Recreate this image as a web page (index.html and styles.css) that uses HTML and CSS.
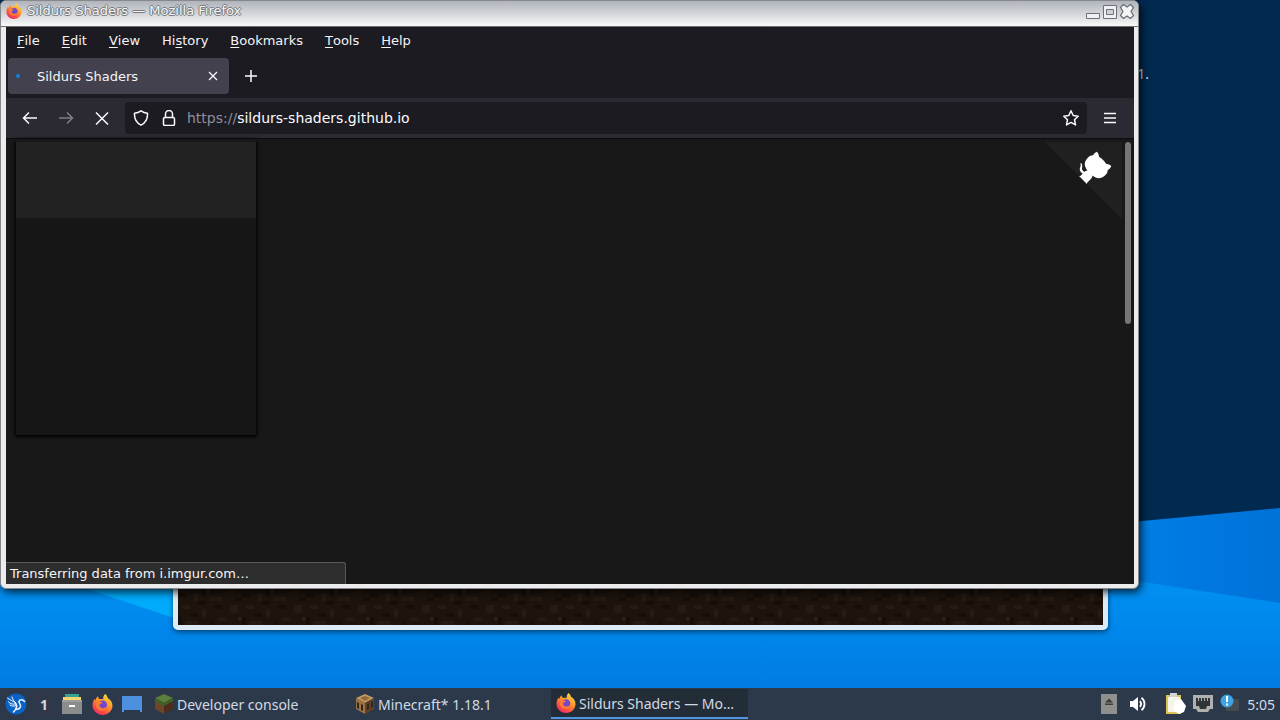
FILE: index.html
```html
<!DOCTYPE html>
<html lang="en">
<head>
    <meta charset="UTF-8">
    <meta name="viewport" content="width=device-width, initial-scale=1.0">
    <title>Sildurs Shaders</title>
    <link rel="stylesheet" href="styles.css">
</head>
<body>
    <!-- shared icons -->
    <svg class="defs" aria-hidden="true">
        <defs>
            <linearGradient id="fox-body" x1="0.8" y1="0" x2="0.2" y2="1">
                <stop offset="0" stop-color="#ffe14a"/>
                <stop offset="0.4" stop-color="#ff9a2b"/>
                <stop offset="0.75" stop-color="#ff4a43"/>
                <stop offset="1" stop-color="#e5277b"/>
            </linearGradient>
            <symbol id="firefox" viewBox="0 0 20 20">
                <path fill="url(#fox-body)" d="M12.6 0c1.6 1.2 2 2.6 2.3 3.8 2.800 1.600 4.600 4 4.600 7.200 0 5-4.200 9-9.400 9S.5 16 .5 10.800c0-2.300.8-4.500 2-6.200.1.700.3 1.200.6 1.600.5-1.800 1.400-3.100 2.700-4 0 1.500.6 2.400 1.600 2.900 1.200-.5 2.300-.5 3.300-.2C10.500 3 11 1.300 12.600 0z"/>
                <circle cx="10" cy="10.500" r="4.300" fill="#7446c9"/>
                <path fill="#ff7b32" d="M3.600 8.500c2-1.600 4.500-1.600 6.300-.6-.4 1.300-2.100 1.200-2.600 2.200-.6 2 1 3.500 2.900 3.400 1.600 0 2.700-.8 3.800-1.700-.4 2.700-2.500 4.400-5 4.200-3.500-.2-5.700-3-5.400-7.500z"/>
            </symbol>
        </defs>
    </svg>

    <main class="desktop">
        <svg class="wallpaper" viewBox="0 0 1280 688" preserveAspectRatio="none" aria-hidden="true">
            <defs>
                <linearGradient id="sea" x1="0" y1="0" x2="0" y2="1">
                    <stop offset="0" stop-color="#0094f5"/>
                    <stop offset="1" stop-color="#007ce2"/>
                </linearGradient>
                <linearGradient id="ridge" x1="0" y1="0" x2="1" y2="0">
                    <stop offset="0" stop-color="#0081e8"/>
                    <stop offset="1" stop-color="#0072d8"/>
                </linearGradient>
            </defs>
            <path fill="#002a50" d="M0 0h1280v688H0z"/>
            <path fill="url(#ridge)" d="M1100 525L1280 508V610H1100z"/>
            <path fill="url(#sea)" d="M0 560H1000L1280 603V688H0z"/>
            <path fill="#00abfc" d="M60 580H260L180 620z"/>
        </svg>

        <span class="icon-label">1.</span>

        <section class="game-window" aria-label="Minecraft* 1.18.1">
            <svg class="dirt" aria-hidden="true">
                <defs>
                    <pattern id="dirt" x="0" y="20" width="64" height="64" patternUnits="userSpaceOnUse">
                        <path fill="#1d140d" d="M0 0h64v64H0z"/>
                        <path fill="#261a11" d="M4 4h8v4H4zM24 0h12v4H24zM48 8h8v4h-8zM16 12h4v8h-4zM32 16h12v4H32zM4 24h8v4H4zM52 24h8v8h-8zM24 28h4v8h-4zM40 36h8v4h-8zM8 40h12v4H8zM56 44h8v4h-8zM28 48h8v4h-8zM12 56h4v4h-4zM44 56h8v4h-8z"/>
                        <path fill="#150e09" d="M12 0h8v4h-8zM40 4h8v4h-8zM0 12h8v4H0zM24 8h4v8h-4zM56 16h8v4h-8zM20 20h8v4h-8zM36 24h8v4h-8zM12 32h8v4h-8zM0 36h4v8H0zM32 40h4v4h-4zM48 48h8v4h-8zM20 52h8v4h-8zM0 56h8v4H0zM36 60h8v4h-8z"/>
                        <path fill="#272019" d="M28 8h4v4h-4zM60 36h4v4h-4zM16 44h4v4h-4z"/>
                    </pattern>
                </defs>
                <rect width="100%" height="100%" fill="url(#dirt)"/>
            </svg>
        </section>

        <section class="window" aria-label="Sildurs Shaders — Mozilla Firefox">
            <header class="titlebar">
                <svg class="title-icon" aria-hidden="true"><use href="#firefox"/></svg>
                <span class="title-text">Sildurs Shaders — Mozilla Firefox</span>
                <button class="win-btn" aria-label="Minimize">
                    <svg width="16" height="16" viewBox="0 0 16 16"><path d="M1.500 10.500h13v5h-13z" fill="#eef0f3" stroke="#6c7077"/></svg>
                </button>
                <button class="win-btn" aria-label="Maximize">
                    <svg width="16" height="16" viewBox="0 0 16 16"><path d="M1.500 2.500h13v13h-13zM4.500 6.500v5h7v-5z" fill="#eef0f3" fill-rule="evenodd" stroke="#6c7077"/></svg>
                </button>
                <button class="win-btn" aria-label="Close">
                    <svg width="16" height="16" viewBox="0 0 16 16"><path d="M4.500 1.500L8 4l3.500-2.500 3 3L12 8.500l2.500 4-3 3L8 13l-3.500 2.500-3-3 2.500-4-2.500-4z" fill="#f4f5f7" stroke="#6c7077" stroke-width="1.300" stroke-linejoin="round"/></svg>
                </button>
            </header>

            <div class="browser">
                <nav class="menubar" aria-label="Menu">
                    <button><u>F</u>ile</button>
                    <button><u>E</u>dit</button>
                    <button><u>V</u>iew</button>
                    <button>Hi<u>s</u>tory</button>
                    <button><u>B</u>ookmarks</button>
                    <button><u>T</u>ools</button>
                    <button><u>H</u>elp</button>
                </nav>

                <div class="tabs">
                    <div class="tab">
                        <span class="loading"></span>
                        <span class="tab-title">Sildurs Shaders</span>
                        <button class="tab-close" aria-label="Close tab">
                            <svg width="10" height="10" viewBox="0 0 10 10"><path d="M1 1l8 8M9 1l-8 8"/></svg>
                        </button>
                    </div>
                    <button class="new-tab" aria-label="New tab">
                        <svg width="14" height="14" viewBox="0 0 14 14"><path d="M7 1v12M1 7h12"/></svg>
                    </button>
                </div>

                <div class="toolbar">
                    <button class="tool" aria-label="Back">
                        <svg width="16" height="16" viewBox="0 0 16 16"><path d="M15 8H2M7 2.500L1.500 8 7 13.500"/></svg>
                    </button>
                    <button class="tool" aria-label="Forward" disabled>
                        <svg width="16" height="16" viewBox="0 0 16 16"><path d="M1 8h13M9 2.500L14.500 8 9 13.500"/></svg>
                    </button>
                    <button class="tool" aria-label="Stop">
                        <svg width="16" height="16" viewBox="0 0 16 16"><path d="M2 2.500l12 12M14 2.500l-12 12"/></svg>
                    </button>
                    <div class="urlbar">
                        <button class="url-icon" aria-label="Tracking protection">
                            <svg width="16" height="16" viewBox="0 0 16 16"><path stroke-linejoin="round" d="M8 .8C6 2.200 4 2.900 1.500 3.200c-.3 5.300 1.500 9.500 6.500 12 5-2.500 6.800-6.700 6.500-12C12 2.900 10 2.200 8 .8z"/></svg>
                        </button>
                        <button class="url-icon" aria-label="Site information">
                            <svg width="16" height="16" viewBox="0 0 16 16"><rect x="2.500" y="7.500" width="11" height="8" rx="1.500"/><path d="M4.500 7.500V4a3.500 3.500 0 0 1 7 0v3.500"/></svg>
                        </button>
                        <label for="url">https://</label>
                        <input id="url" type="text" value="sildurs-shaders.github.io" spellcheck="false">
                        <button class="url-icon" aria-label="Bookmark this page">
                            <svg width="16" height="16" viewBox="0 0 16 16"><path stroke-linejoin="round" d="M8 .8l2.200 4.700 5 .7-3.700 3.500 1 5.200L8 12.400l-4.500 2.500 1-5.200L.8 6.200l5-.7z"/></svg>
                        </button>
                    </div>
                    <button class="tool" aria-label="Open application menu">
                        <svg width="12" height="12" viewBox="0 0 12 12"><path d="M0 1.500h12M0 6h12M0 10.500h12"/></svg>
                    </button>
                </div>

                <div class="page">
                    <div class="card">
                        <div class="card-head"></div>
                    </div>
                    <a class="github-corner" href="#" aria-label="View source on GitHub">
                        <svg width="80" height="80" viewBox="0 0 250 250">
                            <path fill="#202020" d="M0,0 L115,115 L130,115 L142,142 L250,250 L250,0 Z"/>
                            <path fill="#fff" d="M128.3,109.0 C113.8,99.7 119.0,89.6 119.0,89.6 C122.0,82.7 120.5,78.6 120.5,78.6 C119.2,72.0 123.4,76.3 123.4,76.3 C127.3,80.9 125.5,87.3 125.5,87.3 C122.9,97.6 130.6,101.9 134.4,103.2"/>
                            <path fill="#fff" d="M115.0,115.0 C114.9,115.1 118.7,116.5 119.8,115.4 L133.7,101.6 C136.9,99.2 139.9,98.4 142.2,98.6 C133.8,88.0 127.5,74.4 143.8,58.0 C148.5,53.4 154.0,51.2 159.7,51.0 C160.3,49.4 163.2,43.6 171.4,40.1 C171.4,40.1 176.1,42.5 178.8,56.2 C183.1,58.6 187.2,61.8 190.9,65.4 C194.5,69.0 197.7,73.2 200.1,77.6 C213.8,80.2 216.3,84.9 216.3,84.9 C212.7,93.1 206.9,96.0 205.4,96.6 C205.1,102.4 203.0,107.8 198.3,112.5 C181.9,128.9 168.3,122.5 157.7,114.1 C157.9,116.9 156.7,120.9 152.7,124.9 L141.0,136.5 C139.8,137.7 141.6,141.9 141.8,141.8 Z"/>
                        </svg>
                    </a>
                    <div class="scrollbar"><div class="thumb"></div></div>
                    <div class="status">Transferring data from i.imgur.com…</div>
                </div>
            </div>
        </section>
    </main>

    <footer class="taskbar">
        <button class="launch start" aria-label="Start menu">
            <svg width="22" height="22" viewBox="0 0 22 22">
                <circle cx="11" cy="11" r="10.500" fill="#0a63c4"/>
                <path d="M2.500 5c2.500 2 5 3 7.500 4.500M3.500 9c2 2 4.500 2.500 6.500 2M7 4c.5 2.500 2 4.500 4 6M5 12c2 1.500 4 1.500 6 .5" fill="none" stroke="#fff" stroke-linecap="round"/>
                <path d="M19.500 8.500c-1.500-2.500-5-2.500-5.500 0-.3 2 2 2.500 1.500 5-.5 1.800-2.500 3-5 3l-2 2.500M10.500 10.500c1.500 1.500 1.500 3.500 0 5.500" fill="none" stroke="#e6f2ff" stroke-width="1.500" stroke-linecap="round"/>
            </svg>
        </button>
        <button class="workspace">1</button>
        <button class="launch" aria-label="File manager">
            <svg width="20" height="22" viewBox="0 0 20 22">
                <path fill="#35a58f" d="M3 1h14v5H3z"/>
                <path fill="#f3d571" d="M1 4h18v5H1z"/>
                <path fill="#8b8d8d" d="M0 7h20v14H0z"/>
                <path fill="#9c9e9e" d="M0 7h20v2H0z"/>
                <path fill="#fff" d="M7 12h6v2H7z"/>
            </svg>
        </button>
        <button class="launch" aria-label="Firefox">
            <svg width="21" height="21"><use href="#firefox"/></svg>
        </button>
        <button class="launch" aria-label="Show desktop">
            <svg width="22" height="22" viewBox="0 0 22 22"><path fill="#4d90e0" d="M1 3h20v16h-2v-2H3v2H1z"/></svg>
        </button>
        <div class="tasks">
            <button class="task">
                <svg width="20" height="20" viewBox="0 0 20 20">
                    <path fill="#587f3b" d="M10 0l9 4-9 5-9-5z"/>
                    <path fill="#6d4629" d="M1 4l9 5v11l-9-5z"/>
                    <path fill="#4a2d1c" d="M19 4l-9 5v11l9-5z"/>
                    <path fill="#3d6129" d="M1 4l9 5v3L7 9.500v2L4 8v2L1 7zM19 4l-9 5v3l3-2v1l3-3v1l3-2z"/>
                </svg>
                <span>Developer console</span>
            </button>
            <button class="task">
                <svg width="20" height="20" viewBox="0 0 20 20">
                    <path fill="#c49a62" d="M10 0l9 4-9 5-9-5z"/>
                    <path fill="#9b7243" d="M1 4l9 5v11l-9-5z"/>
                    <path fill="#5e4329" d="M19 4l-9 5v11l9-5z"/>
                    <path fill="#35261a" d="M2 8l2 1v6l-2-1zM6 10l2 1v6l-2-1zM12 10l2-1v6l-2 1zM16 8l2-1v6l-2 1z"/>
                    <path fill="#8f6a3d" d="M5 4l5-2 5 2-5 3z"/>
                </svg>
                <span>Minecraft* 1.18.1</span>
            </button>
            <button class="task active">
                <svg width="20" height="20"><use href="#firefox"/></svg>
                <span>Sildurs Shaders — Mo…</span>
            </button>
        </div>
        <div class="tray">
            <button aria-label="Eject">
                <svg width="16" height="20" viewBox="0 0 16 20"><path fill="#8f8f8d" d="M0 0h16v20H0z"/><path fill="#3d3d3c" d="M8 4.500l4 4H4zM4 9.500h8v1.500H4z"/></svg>
            </button>
            <button class="volume" aria-label="Volume">
                <svg width="16" height="16" viewBox="0 0 16 16"><path fill="#fff" d="M0 5h3l5-4v14l-5-4H0z"/><path d="M10 5c1.500 2 1.500 4 0 6M11.500 1.800c4 3 4 9.400 0 12.400" fill="none" stroke="#fff" stroke-width="1.800"/></svg>
            </button>
            <button aria-label="Clipboard">
                <svg width="20" height="22" viewBox="0 0 20 22"><path fill="#d9c455" d="M0 2h15v19H0z"/><path fill="#f6f4e8" d="M2 4h12v15H2z"/><path fill="#d3d5d5" d="M4 0h7v4H4z"/><path fill="#fff" d="M9 8l6-2 5 7-2 6-5 2-6-4z"/></svg>
            </button>
            <button aria-label="Network">
                <svg width="20" height="18" viewBox="0 0 20 18"><path fill="#b0b0ae" d="M0 0h20v14h-3l-2 3H5l-2-3H0z"/><path fill="#30353a" d="M3 3h14v8h-3l-1 3H7l-1-3H3z"/><path d="M5.500 3v3M8.500 3v3M11.500 3v3M14.500 3v3" stroke="#b0b0ae"/></svg>
            </button>
            <button aria-label="Notifications">
                <svg width="20" height="20" viewBox="0 0 20 20"><path fill="#464b50" d="M9 5h10v12H6v-4z"/><circle cx="7" cy="7" r="6.500" fill="#3da3e3"/><path d="M7 2v6M7 9.500v2" stroke="#fff" stroke-width="2"/></svg>
            </button>
            <time>5:05</time>
        </div>
    </footer>
</body>
</html>
```
FILE: styles.css
```css
* {
    box-sizing: border-box;
}
body {
    margin: 0;
    height: 100vh;
    display: flex;
    flex-direction: column;
    overflow: hidden;
    font-family: "DejaVu Sans", sans-serif;
    font-size: 13px;
    color: #f4f4f7;
}
button {
    display: flex;
    align-items: center;
    justify-content: center;
    padding: 0;
    border: none;
    background: none;
    font: inherit;
    color: inherit;
}
svg {
    display: block;
}
.defs {
    position: absolute;
    width: 0;
    height: 0;
}

/* desktop */
.desktop {
    position: relative;
    flex: 1;
    min-height: 0;
    overflow: hidden;
    background: #002a50;
}
.wallpaper {
    width: 100%;
    height: 100%;
}
.icon-label {
    position: absolute;
    top: 64px;
    right: 131px;
    font-family: "Noto Sans", sans-serif;
    font-size: 14px;
    line-height: 20px;
    color: #d5dde5;
}
.game-window {
    position: absolute;
    left: 173px;
    right: 172px;
    top: 300px;
    bottom: 58px;
    border: 5px solid #dcebf5;
    border-radius: 5px;
    box-shadow: 0 2px 5px rgba(0, 0, 0, 0.5);
}
.dirt {
    width: 100%;
    height: 100%;
}

/* browser window */
.window {
    position: absolute;
    left: 0;
    right: 141px;
    top: 0;
    bottom: 99px;
    display: flex;
    flex-direction: column;
    border: 1px solid #85888c;
    border-radius: 6px;
    background: #ececec;
    box-shadow: 2px 3px 8px rgba(0, 0, 0, 0.8);
}
.titlebar {
    display: flex;
    align-items: center;
    gap: 1px;
    height: 26px;
    padding: 0 3px 6px 5px;
    border-bottom: 1px solid #6b6d70;
    border-radius: 5px 5px 0 0;
    background: linear-gradient(#b0b4bb, #d3d5d9 50%, #f8f8f8);
}
.title-icon {
    width: 16px;
    height: 16px;
}
.title-text {
    flex: 1;
    padding-left: 4px;
    color: #f4f5f6;
    text-shadow: 1px 0 #777b80, -1px 0 #777b80, 0 1px #777b80, 0 -1px #777b80;
}
.browser {
    flex: 1;
    min-height: 0;
    display: flex;
    flex-direction: column;
    margin: 0 4px 4px 5px;
    background: #1c1b22;
}
.menubar {
    display: flex;
    gap: 6px;
    height: 27px;
    padding: 0 3px;
}
.menubar button {
    padding: 0 8px;
}
.menubar u {
    text-underline-offset: 2px;
}
.tabs {
    display: flex;
    align-items: center;
    height: 44px;
    padding: 0 2px;
}
.tab {
    display: flex;
    align-items: center;
    width: 221px;
    height: 36px;
    padding: 0 8px;
    border-radius: 4px;
    background: #42414d;
}
.loading {
    width: 4px;
    height: 4px;
    border-radius: 50%;
    background: #0a84e0;
}
.tab-title {
    flex: 1;
    padding-left: 17px;
}
.tab-close {
    width: 16px;
    height: 24px;
}
.tab-close svg,
.new-tab svg,
.tool svg,
.url-icon svg {
    fill: none;
    stroke: #fbfbfe;
    stroke-width: 1.5;
}
.tab-close svg {
    stroke-width: 1.2;
}
.new-tab {
    width: 44px;
    height: 36px;
}
.toolbar {
    display: flex;
    align-items: center;
    height: 41px;
    padding: 0 6px;
    border-bottom: 1px solid #0c0c0d;
    background: #2b2a33;
}
.tool {
    width: 36px;
    height: 32px;
}
.tool:disabled {
    opacity: 0.4;
}
.urlbar {
    flex: 1;
    display: flex;
    align-items: center;
    height: 32px;
    margin: 0 5px;
    padding: 0 2px;
    border-radius: 4px;
    background: #1c1b22;
    font-size: 14px;
}
.url-icon {
    width: 28px;
    height: 28px;
}
.urlbar label {
    padding-left: 4px;
    color: #8f8f9a;
}
.urlbar input {
    flex: 1;
    min-width: 0;
    padding: 0;
    border: none;
    outline: none;
    background: none;
    font: inherit;
    color: #fbfbfe;
}

/* web page */
.page {
    position: relative;
    flex: 1;
    min-height: 0;
    padding: 0 10px;
    background: #181818;
}
/* shade under the toolbar */
.page::after {
    content: "";
    position: absolute;
    top: 0;
    left: 0;
    right: 0;
    height: 3px;
    background: #17171c;
}
.card {
    width: 240px;
    height: 296px;
    background: #161616;
    box-shadow: 0 1px 3px 1px #000;
}
.card-head {
    height: 79px;
    background: #222;
}
.github-corner {
    position: absolute;
    top: 0;
    right: 12px;
}
.scrollbar {
    position: absolute;
    top: 0;
    right: 0;
    bottom: 0;
    width: 12px;
    padding: 3px;
}
.thumb {
    height: 182px;
    border-radius: 3px;
    background: #767676;
}
.status {
    position: absolute;
    left: 0;
    bottom: 0;
    width: 340px;
    height: 22px;
    padding-left: 4px;
    border: 1px solid #5a5a5c;
    border-width: 1px 1px 0 0;
    border-radius: 0 3px 0 0;
    background: #2d2d2d;
    line-height: 21px;
}

/* taskbar */
.taskbar {
    display: flex;
    align-items: center;
    height: 32px;
    padding: 0 5px;
    background: #2b394b;
    font-family: "Noto Sans", sans-serif;
    font-size: 14px;
    color: #d3dae3;
}
.launch {
    width: 30px;
    height: 32px;
}
.start {
    width: 22px;
}
.workspace {
    width: 18px;
    height: 24px;
    margin: 0 4px 0 8px;
    background: #2f3748;
    font-weight: bold;
}
.tasks {
    display: flex;
    gap: 4px;
    margin-left: 2px;
}
.task {
    width: 197px;
    height: 30px;
    justify-content: flex-start;
    gap: 3px;
    padding: 0 5px;
    white-space: nowrap;
}
.task.active {
    border-bottom: 2px solid #5294e2;
    background: #222d38;
}
.tray {
    flex: 1;
    display: flex;
    align-items: center;
    justify-content: flex-end;
    gap: 7px;
}
.volume {
    margin: 0 13px 0 6px;
}
```
